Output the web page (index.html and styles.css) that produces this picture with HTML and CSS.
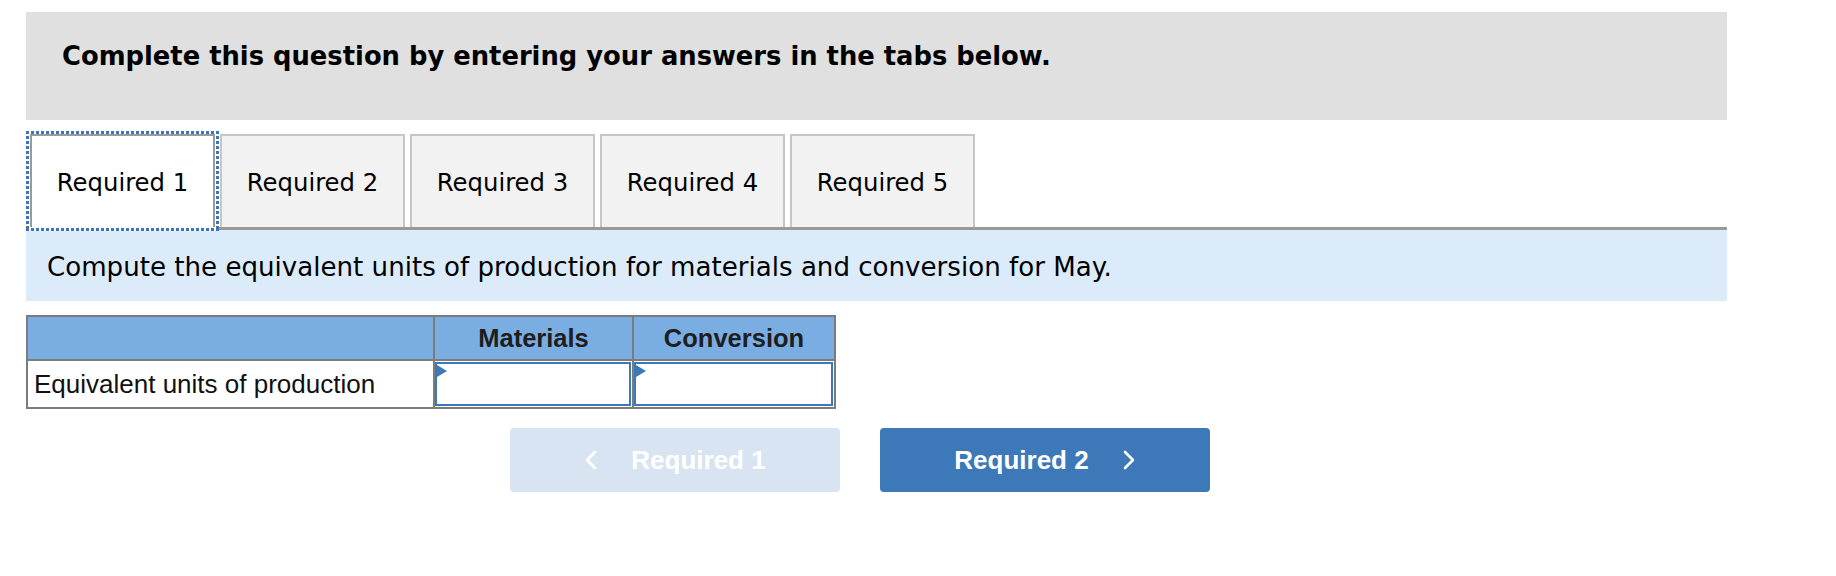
FILE: index.html
```html
<!DOCTYPE html>
<html>
<head>
<meta charset="utf-8">
<link rel="stylesheet" href="styles.css">
</head>
<body>
<div class="page">
  <div class="banner">
    <h1 class="banner-title">Complete this question by entering your answers in the tabs below.</h1>
  </div>

  <div class="tabs">
    <div class="tab tab-active">Required 1</div>
    <div class="tab">Required 2</div>
    <div class="tab">Required 3</div>
    <div class="tab">Required 4</div>
    <div class="tab">Required 5</div>
  </div>

  <div class="instruction">Compute the equivalent units of production for materials and conversion for May.</div>

  <table class="grid">
    <colgroup>
      <col class="col-label">
      <col class="col-value">
      <col class="col-value2">
    </colgroup>
    <thead>
      <tr>
        <th></th>
        <th>Materials</th>
        <th>Conversion</th>
      </tr>
    </thead>
    <tbody>
      <tr>
        <td class="label">Equivalent units of production</td>
        <td class="cell"><div class="input"></div></td>
        <td class="cell"><div class="input"></div></td>
      </tr>
    </tbody>
  </table>

  <div class="nav">
    <button class="nav-btn nav-prev" type="button">
      <svg class="chev" width="14" height="20" viewBox="0 0 14 20"><polyline points="11,2 3,10 11,18" fill="none" stroke="#ffffff" stroke-width="2.6" stroke-linecap="round" stroke-linejoin="round"/></svg>
      <span>Required 1</span>
    </button>
    <button class="nav-btn nav-next" type="button">
      <span>Required 2</span>
      <svg class="chev" width="14" height="20" viewBox="0 0 14 20"><polyline points="3,2 11,10 3,18" fill="none" stroke="#ffffff" stroke-width="2.6" stroke-linecap="round" stroke-linejoin="round"/></svg>
    </button>
  </div>
</div>
</body>
</html>
```

FILE: styles.css
```css
html, body {
  margin: 0;
  padding: 0;
  background: #ffffff;
}

.page {
  width: 1701px;
  margin: 12px 0 0 26px;
  font-family: "DejaVu Sans", Verdana, sans-serif;
  color: #000;
}

.banner {
  height: 108px;
  background: #e0e0e0;
  box-sizing: border-box;
  padding: 29px 36px 0 36px;
}

.banner-title {
  margin: 0;
  font-size: 25.8px;
  font-weight: bold;
  line-height: 30px;
}

.tabs {
  display: flex;
  gap: 5px;
  margin-top: 14px;
  padding-left: 4px;
  border-bottom: 3px solid #999999;
}

.tab {
  position: relative;
  width: 185px;
  height: 93px;
  box-sizing: border-box;
  border: 2px solid #c6c6c6;
  border-bottom: none;
  background: #f2f2f2;
  display: flex;
  align-items: center;
  justify-content: center;
  font-size: 24.3px;
  padding-top: 2px;
}

.tab-active {
  background: #ffffff;
  border-color: #9a9a9a;
}

.tab-active::after {
  content: "";
  position: absolute;
  left: -6px;
  right: -6px;
  top: -5px;
  bottom: -4px;
  pointer-events: none;
  background:
    repeating-linear-gradient(90deg, #3c74bd 0 3px, #ffffff 3px 5px) top left / 100% 3px no-repeat,
    repeating-linear-gradient(90deg, #3c74bd 0 3px, #ffffff 3px 5px) bottom left / 100% 3px no-repeat,
    repeating-linear-gradient(180deg, #3c74bd 0 3px, #ffffff 3px 5px) top left / 3px 100% no-repeat,
    repeating-linear-gradient(180deg, #3c74bd 0 3px, #ffffff 3px 5px) top right / 3px 100% no-repeat,
    linear-gradient(#ffffff, #ffffff) left bottom 3px / 100% 1px no-repeat;
}

.instruction {
  height: 71px;
  box-sizing: border-box;
  background: #dbebf9;
  padding-left: 21px;
  display: flex;
  align-items: center;
  font-size: 26.1px;
  padding-top: 2px;
}

.grid {
  margin-top: 14px;
  border-collapse: collapse;
  width: 808px;
  table-layout: fixed;
  font-family: "Liberation Sans", Arial, sans-serif;
}

.col-label { width: 407px; }
.col-value { width: 199px; }
.col-value2 { width: 202px; }

.grid th,
.grid td {
  border: 2px solid #7c7c7c;
  padding: 0;
}

.grid th {
  height: 44px;
  background: #7aade2;
  font-size: 25.5px;
  font-weight: bold;
  color: #1e1e1e;
  text-align: center;
  vertical-align: middle;
  padding-bottom: 0;
  box-sizing: border-box;
}

.grid td {
  height: 45px;
  background: #ffffff;
}

.grid td.label {
  font-size: 26px;
  padding-left: 6px;
  color: #111;
  vertical-align: middle;
}

.cell {
  padding: 0 1px 1px 0 !important;
}

.input {
  position: relative;
  height: 44px;
  box-sizing: border-box;
  border: 2px solid #3d78b8;
  background: #ffffff;
}

.input::before {
  content: "";
  position: absolute;
  left: 0;
  top: 1px;
  width: 0;
  height: 0;
  border-top: 6px solid transparent;
  border-bottom: 6px solid transparent;
  border-left: 10px solid #3d78b8;
}

.nav {
  display: flex;
  gap: 40px;
  margin-top: 19px;
  padding-left: 484px;
}

.nav-btn {
  width: 330px;
  height: 64px;
  border: none;
  border-radius: 4px;
  display: flex;
  align-items: center;
  justify-content: center;
  gap: 33px;
  font-family: "Liberation Sans", Arial, sans-serif;
  font-size: 26px;
  font-weight: bold;
  color: #ffffff;
  padding: 0;
}

.nav-prev {
  background: #d8e4f1;
}

.nav-next {
  background: #3d78b8;
}

.chev {
  display: block;
}
```
